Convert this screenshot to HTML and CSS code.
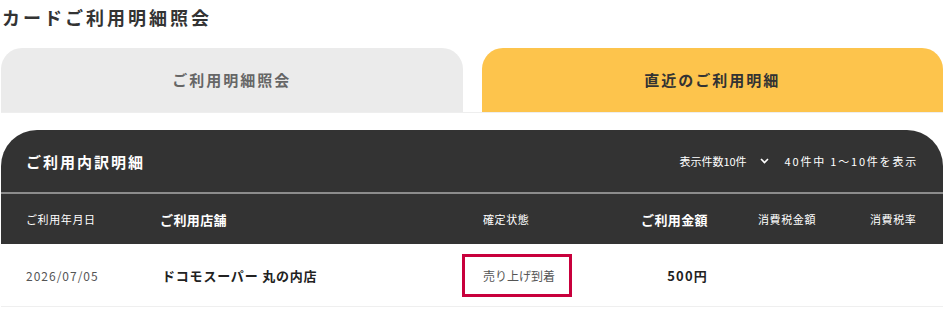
FILE: index.html
```html
<!DOCTYPE html>
<html>
<head>
    <title>カードご利用明細照会</title>
    <meta charset="utf-8">
    <link rel="stylesheet" href="styles.css">
</head>
<body>
    <div class="page">
        <h1 class="title">カードご利用明細照会</h1>

        <div class="tabs">
            <div class="tab">ご利用明細照会</div>
            <div class="tab active">直近のご利用明細</div>
        </div>

        <div class="detail">
            <div class="detail-head">
                <h2 class="detail-title">ご利用内訳明細</h2>
                <div class="detail-meta">
                    <span class="per-page">表示件数10件
                        <svg class="chev" width="9" height="6" viewBox="0 0 9 6"><path d="M1 1 L4.5 4.5 L8 1" fill="none" stroke="#fff" stroke-width="1.6"/></svg>
                    </span>
                    <span class="count">40件中 1～10件を表示</span>
                </div>
            </div>

            <div class="row row-head">
                <div class="cell small">ご利用年月日</div>
                <div class="cell strong">ご利用店舗</div>
                <div class="cell small pad-status">確定状態</div>
                <div class="cell strong right">ご利用金額</div>
                <div class="cell small pad-tax">消費税金額</div>
                <div class="cell small">消費税率</div>
            </div>

            <div class="row row-data">
                <div class="cell date">2026/07/05</div>
                <div class="cell shop">ドコモスーパー 丸の内店</div>
                <div class="cell"><span class="status">売り上げ到着</span></div>
                <div class="cell amount right">500円</div>
                <div class="cell"></div>
                <div class="cell"></div>
            </div>
        </div>
    </div>
</body>
</html>
```

FILE: styles.css
```css
html, body {
    margin: 0;
    padding: 0;
    background-color: #fff;
    color: #333;
    font-family: "Noto Sans CJK JP", "Noto Sans", sans-serif;
}
.page {
    padding: 0 1px 0 1px;
}
.title {
    margin: 0;
    padding: 4px 0 0 1px;
    font-size: 18px;
    line-height: 26px;
    letter-spacing: 3px;
    font-weight: bold;
    color: #333;
}
.tabs {
    display: flex;
    gap: 19px;
    margin-top: 18px;
    border-bottom: 1px solid #eeeeee;
}
.tab {
    flex: 1;
    height: 64px;
    line-height: 64px;
    text-align: center;
    background-color: #ebebeb;
    color: #666;
    border-radius: 21px 21px 0 0;
    font-size: 15px;
    font-weight: bold;
    letter-spacing: 2px;
}
.tab.active {
    background-color: #fdc44c;
    color: #333;
}

.detail {
    margin-top: 17px;
}
.detail-head {
    display: flex;
    align-items: center;
    justify-content: space-between;
    height: 62px;
    padding: 0 25px;
    background-color: #333;
    border-radius: 36px 36px 0 0;
    border-bottom: 2px solid #8c8c8c;
}
.detail-title {
    margin: 0;
    font-size: 15px;
    letter-spacing: 2px;
    font-weight: bold;
    color: #fff;
}
.detail-meta {
    display: flex;
    align-items: center;
    gap: 16px;
    color: #fff;
    font-size: 11px;
}
.per-page {
    display: flex;
    align-items: center;
    gap: 13px;
    letter-spacing: 0;
}
.count {
    letter-spacing: 1.8px;
}
.chev {
    display: block;
}

.row {
    display: grid;
    grid-template-columns: 134px 302px 138px 108px 162px 1fr;
    align-items: center;
    padding-left: 25px;
}
.row-head {
    height: 50px;
    background-color: #333;
    color: #fff;
}
.row-data {
    height: 62px;
    background-color: #fff;
    border-bottom: 1px solid #efefef;
}
.small {
    font-size: 11px;
    letter-spacing: 0.6px;
}
.strong {
    font-size: 13px;
    font-weight: bold;
    letter-spacing: 0.4px;
}
.right {
    text-align: right;
}
.pad-status {
    padding-left: 21px;
}
.pad-tax {
    padding-left: 50px;
}
.date {
    font-size: 12px;
    color: #555;
    letter-spacing: 1px;
}
.shop {
    font-size: 13px;
    font-weight: bold;
    color: #222;
    padding-left: 2px;
    letter-spacing: 0.8px;
}
.status {
    display: block;
    box-sizing: border-box;
    width: 110px;
    height: 43px;
    line-height: 37px;
    padding-left: 18px;
    border: 3px solid #c8003c;
    font-size: 12px;
    color: #555;
}
.amount {
    font-size: 13px;
    font-weight: bold;
    color: #222;
    letter-spacing: 1.2px;
}
```
